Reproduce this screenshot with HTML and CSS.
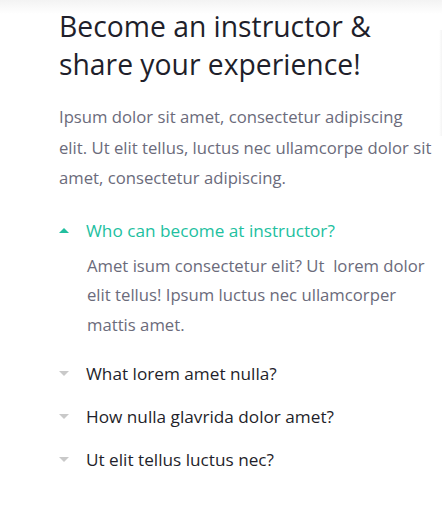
FILE: index.html
```html
<!DOCTYPE html>
<html lang="en">
<head>
<meta charset="utf-8">
<title>Become an instructor</title>
<link rel="stylesheet" href="styles.css">
</head>
<body>
<div class="topfade"></div>
<div class="edge"></div>
<main class="section">
  <h1 class="title">Become an instructor &amp; share your experience!</h1>
  <p class="lead">Ipsum dolor sit amet, consectetur adipiscing elit. Ut elit tellus, luctus nec ullamcorpe dolor sit amet, consectetur adipiscing.</p>
  <ul class="faq">
    <li class="faq-item open">
      <div class="q"><span class="caret up"></span><span class="q-text">Who can become at instructor?</span></div>
      <p class="a">Amet isum consectetur elit? Ut &nbsp;lorem dolor elit tellus! Ipsum luctus nec ullamcorper mattis amet.</p>
    </li>
    <li class="faq-item">
      <div class="q"><span class="caret down"></span><span class="q-text">What lorem amet nulla?</span></div>
    </li>
    <li class="faq-item">
      <div class="q"><span class="caret down"></span><span class="q-text">How nulla glavrida dolor amet?</span></div>
    </li>
    <li class="faq-item">
      <div class="q"><span class="caret down"></span><span class="q-text">Ut elit tellus luctus nec?</span></div>
    </li>
  </ul>
</main>
</body>
</html>
```
FILE: styles.css
```css
* { box-sizing: border-box; }
html, body { margin: 0; padding: 0; background: #fff; }
body {
  font-family: "Open Sans", "Noto Sans", sans-serif;
  color: #6b6b7b;
  position: relative;
  height: 508px;
  overflow: hidden;
}
.topfade {
  position: absolute;
  left: 0; right: 0; top: 0;
  height: 14px;
  background: linear-gradient(#f3f3f3, #ffffff);
}
.edge {
  position: absolute;
  right: 0; top: 30px;
  width: 3px; height: 106px;
  background: linear-gradient(90deg, #ffffff, #f4f4f4);
}
.section {
  position: relative;
  padding: 7px 6px 0 59px;
  width: 442px;
}
.title {
  margin: 0;
  font-weight: 400;
  font-size: 28.3px;
  line-height: 38px;
  color: #1f1f2b;
  width: 340px;
}
.lead {
  margin: 19px 0 0;
  width: 374px;
  font-size: 16.7px;
  line-height: 30.5px;
  color: #6b6b7b;
}
.faq { list-style: none; margin: 22px 0 0; padding: 0; }
.faq-item { margin-bottom: 13px; }
.faq-item.open { margin-bottom: 19px; }
.q { display: flex; align-items: center; height: 30px; }
.caret {
  width: 0; height: 0;
  border-left: 5.5px solid transparent;
  border-right: 5.5px solid transparent;
  margin-right: 17px;
  flex: none;
}
.caret.up { border-bottom: 5px solid #22bf9f; }
.caret.down { border-top: 5px solid #c9c9c9; }
.q-text { font-size: 17.2px; color: #1f1f2b; }
.open .q-text { color: #22bf9f; }
.a {
  margin: 5px 0 0 28px;
  font-size: 16.7px;
  line-height: 29.5px;
  color: #6b6b7b;
}
```
